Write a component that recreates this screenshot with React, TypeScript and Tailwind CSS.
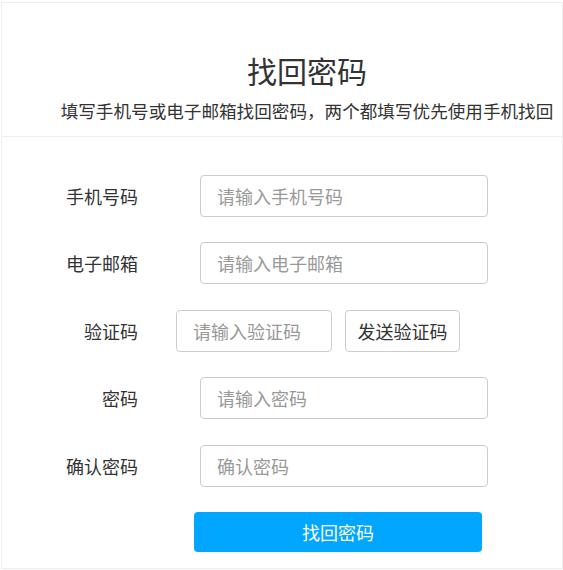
import React from "react";

const font = { fontFamily: '"Noto Sans CJK SC", "Noto Sans", sans-serif' };

const Field = ({ label, placeholder, mt }: { label: string; placeholder: string; mt: string }) => (
  <div className={`flex items-center ${mt}`}>
    <label className="w-[136px] text-right text-[18px] text-[#333]">{label}</label>
    <input
      className="ml-[62px] h-[42px] w-[288px] rounded-[4px] border border-[#ccc] bg-white pl-[16px] text-[18px] text-[#333] outline-none placeholder:text-[#999]"
      placeholder={placeholder}
      type="text"
    />
  </div>
);

export default function App() {
  return (
    <div className="bg-white" style={font}>
      <div className="ml-[1px] mt-[2px] w-[562px] border border-[#eee] bg-white pb-[16px]">
        {/* header */}
        <div className="border-b border-[#eee] pb-[13px] pl-[50px] pt-[47px] text-center">
          <h1 className="text-[30px] leading-[40px] text-[#333]">找回密码</h1>
          <p className="mt-[9px] whitespace-nowrap text-[17.6px] leading-[24px] text-[#333]">
            填写手机号或电子邮箱找回密码，两个都填写优先使用手机找回
          </p>
        </div>

        {/* form */}
        <Field label="手机号码" placeholder="请输入手机号码" mt="mt-[38px]" />
        <Field label="电子邮箱" placeholder="请输入电子邮箱" mt="mt-[25px]" />
        <div className="mt-[26px] flex items-center">
          <label className="w-[136px] text-right text-[18px] text-[#333]">验证码</label>
          <input
            className="ml-[38px] h-[42px] w-[156px] rounded-[4px] border border-[#ccc] bg-white pl-[16px] text-[18px] text-[#333] outline-none placeholder:text-[#999]"
            placeholder="请输入验证码"
            type="text"
          />
          <button className="ml-[13px] h-[42px] w-[115px] rounded-[4px] border border-[#ccc] bg-white text-[18px] text-[#333]">
            发送验证码
          </button>
        </div>
        <Field label="密码" placeholder="请输入密码" mt="mt-[25px]" />
        <Field label="确认密码" placeholder="确认密码" mt="mt-[26px]" />
        <button className="ml-[192px] mt-[25px] h-[40px] w-[288px] rounded-[4px] bg-[#00a6ff] text-[18px] text-white">
          找回密码
        </button>
      </div>
    </div>
  );
}
